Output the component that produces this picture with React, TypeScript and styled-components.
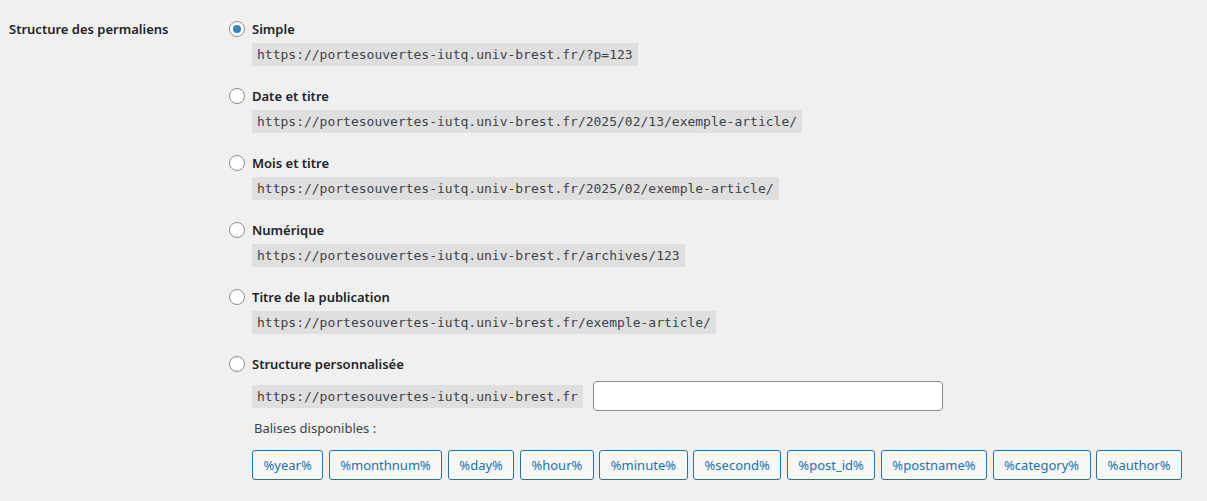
import React from "react";
import styled, { createGlobalStyle } from "styled-components";

const Global = createGlobalStyle`
  html, body { margin: 0; padding: 0; background: #f0f0f1; }
  body { font-family: "Noto Sans", "Open Sans", sans-serif; font-size: 13px; color: #3c434a; }
  * { box-sizing: border-box; }
`;

const Table = styled.div`
  display: grid;
  grid-template-columns: 220px 1fr;
  padding: 19px 0 0 9px;
`;

const Heading = styled.div`
  font-weight: 600;
  font-size: 13px;
  line-height: 20px;
  color: #1d2327;
`;

const Fieldset = styled.div`
  display: flex;
  flex-direction: column;
  gap: 20px;
`;

const Row = styled.div`
  display: grid;
  grid-template-columns: 16px 1fr;
  column-gap: 7px;
  align-items: start;
`;

const Radio = styled.span<{ $checked?: boolean }>`
  width: 16px;
  height: 16px;
  margin-top: 2px;
  border-radius: 50%;
  border: 1px solid #8c8f94;
  background: #fff;
  display: flex;
  align-items: center;
  justify-content: center;
  &::after {
    content: "";
    display: ${(p) => (p.$checked ? "block" : "none")};
    width: 8px;
    height: 8px;
    border-radius: 50%;
    background: #3582c4;
  }
`;

const Body = styled.div`
  display: flex;
  flex-direction: column;
  align-items: flex-start;
`;

const Label = styled.div`
  font-weight: 600;
  font-size: 13px;
  line-height: 20px;
  color: #1d2327;
`;

const Code = styled.code`
  font-family: "DejaVu Sans Mono", monospace;
  font-size: 13px;
  line-height: 18px;
  padding: 3px 5px 2px;
  background: rgba(0, 0, 0, 0.07);
  color: #3c434a;
  white-space: nowrap;
`;

const Sample = styled(Code)`
  margin-top: 4px;
`;

const CustomLine = styled.div`
  display: flex;
  align-items: center;
  gap: 10px;
  margin-top: 7px;
`;

const TextInput = styled.input`
  width: 350px;
  height: 30px;
  border: 1px solid #8c8f94;
  border-radius: 4px;
  background: #fff;
  padding: 0 8px;
  font: inherit;
`;

const TagsTitle = styled.div`
  margin: 8px 0 0 2px;
  font-size: 13px;
  line-height: 18px;
  color: #3c434a;
`;

const Tags = styled.div`
  display: flex;
  flex-wrap: wrap;
  gap: 5.5px;
  margin-top: 13px;
`;

const TagButton = styled.button`
  height: 30px;
  padding: 0 10.5px;
  border: 1px solid #2271b1;
  border-radius: 3px;
  background: #f6f7f7;
  color: #2271b1;
  font-family: "Noto Sans", "Open Sans", sans-serif;
  font-size: 13px;
  line-height: 28px;
  cursor: pointer;
`;

const base = "https://portesouvertes-iutq.univ-brest.fr";

const options = [
  { label: "Simple", url: `${base}/?p=123`, checked: true },
  { label: "Date et titre", url: `${base}/2025/02/13/exemple-article/` },
  { label: "Mois et titre", url: `${base}/2025/02/exemple-article/` },
  { label: "Numérique", url: `${base}/archives/123` },
  { label: "Titre de la publication", url: `${base}/exemple-article/` },
];

const tags = [
  "%year%",
  "%monthnum%",
  "%day%",
  "%hour%",
  "%minute%",
  "%second%",
  "%post_id%",
  "%postname%",
  "%category%",
  "%author%",
];

export default function App() {
  return (
    <>
      <Global />
      <Table>
        <Heading>Structure des permaliens</Heading>
        <Fieldset>
          {options.map((o) => (
            <Row key={o.label}>
              <Radio $checked={o.checked} />
              <Body>
                <Label>{o.label}</Label>
                <Sample>{o.url}</Sample>
              </Body>
            </Row>
          ))}
          <Row>
            <Radio />
            <Body>
              <Label>Structure personnalisée</Label>
              <CustomLine>
                <Code>{base}</Code>
                <TextInput type="text" />
              </CustomLine>
              <TagsTitle>Balises disponibles :</TagsTitle>
              <Tags>
                {tags.map((t) => (
                  <TagButton key={t}>{t}</TagButton>
                ))}
              </Tags>
            </Body>
          </Row>
        </Fieldset>
      </Table>
    </>
  );
}
